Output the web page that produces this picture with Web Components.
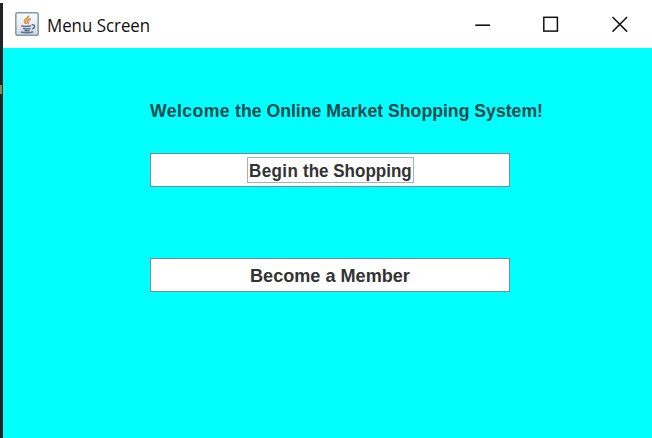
<!DOCTYPE html>
<html lang="en"><head><meta charset="utf-8"><title>Menu Screen</title>
<style>html,body{margin:0;height:100%;overflow:hidden;background:#fff}</style></head>
<body><app-window></app-window>
<script>
const define=(name,html,init)=>customElements.define(name,class extends HTMLElement{
  constructor(){super();this.attachShadow({mode:'open'}).innerHTML=html;}
  connectedCallback(){if(init)init(this);}
});
// Text condensed or widened horizontally to the width in its "width" attribute
define('fit-text',`<style>:host{display:block;white-space:nowrap;overflow:visible}
span{display:inline-block;transform-origin:0 50%}</style><span><slot></slot></span>`,el=>{
  const w=+el.getAttribute('width'),s=el.shadowRoot.querySelector('span');
  el.style.width=w+'px';
  s.style.transform=`scaleX(${w/s.offsetWidth})`;
});
define('java-icon',`<style>:host{display:block;width:24px;height:24px}svg{display:block}</style>
<svg width="24" height="24" viewBox="0 0 24 24" fill="none">
<defs><linearGradient id="g" x2="0" y2="1"><stop stop-color="#f8fafb"/><stop offset=".5" stop-color="#e9eef2"/><stop offset="1" stop-color="#ccd8e1"/></linearGradient></defs>
<rect x=".8" y=".8" width="22.4" height="22.4" rx="1.8" fill="url(#g)" stroke="#8499a8" stroke-width="1.5"/>
<path d="M13.4 3.8c.8 2.2-4.3 3.2-3.8 5.8.2 1 1.3 1.5 1.7 2.3M15.8 6.8c-2 .7-3.6 1.7-3.2 2.9.3.8 1 1 .3 2.2" stroke="#e08a38" stroke-width="1.8"/>
<path d="M6.3 13.8c2 .7 6.5.6 9.6-.1M8 16.4c2 .7 5 .6 7.4.1M9.4 18.4c1.6.4 3.6.3 5.2 0M16.6 12.9c4.3-.8 3.8 3.3.2 4M6 20c2.5 1 9.5 1 12.3-.2" stroke="#58748d" stroke-width="1.5"/>
</svg>`);
define('window-controls',`<style>:host{display:flex;align-items:center;gap:53px}svg{display:block}</style>
<svg width="16" height="17"><path d="M1.3 9.2h15" stroke="#111" stroke-width="1.6"/></svg>
<svg width="16" height="17" fill="none"><rect x=".8" y="1.3" width="13.6" height="13.8" stroke="#111" stroke-width="1.5"/></svg>
<svg width="16" height="17"><path d="M.5 1l14.6 14.6M15.1 1L.5 15.6" stroke="#111" stroke-width="1.5"/></svg>`);
define('title-bar',`<style>:host{display:flex;align-items:center;height:48px;box-sizing:border-box;padding:0 24px 0 12px;background:#fff;color:#101010;font:18px/24px "Open Sans","Noto Sans",sans-serif}
java-icon{margin-right:8px}window-controls{margin-left:auto}fit-text{margin-top:2px}</style>
<java-icon></java-icon><fit-text width="103"><slot></slot></fit-text><window-controls></window-controls>`);
define('push-button',`<style>:host{display:block;width:360px;height:34px}
button{width:100%;height:100%;box-sizing:border-box;display:flex;align-items:center;justify-content:center;padding:0;border:1px solid #6e8e98;border-radius:0;background:#fff;color:#333;font:inherit}
div{box-sizing:border-box;height:26px;padding:0 1px;border:1px solid transparent;line-height:25px}
:host([focused]) div{border-color:#9db3c8}</style><button><div><slot></slot></div></button>`);
define('menu-panel',`<style>:host{display:flex;flex-direction:column;align-items:flex-start;flex:1;box-sizing:border-box;background:#0ff;padding:52px 0 0 147px;color:#17494d;font:bold 19px/22px "Liberation Sans",Arial,sans-serif}
.first{margin-top:31px}.second{margin-top:71px}.lead{letter-spacing:.45px}</style>
<fit-text width="393"><span class="lead">Welcome</span> the Online Market Shopping System!</fit-text>
<push-button class="first" focused><fit-text width="163"><span class="lead">Begin</span> the Shopping</fit-text></push-button>
<push-button class="second"><fit-text width="160">Become a Member</fit-text></push-button>`);
define('app-window',`<style>:host{display:grid;grid-template-columns:3px 1fr;height:438px;width:652px}
.edge{margin-top:3px;background:linear-gradient(#8b8654,#8b8654) 0 82px/2px 9px no-repeat,#202427}
main{display:flex;flex-direction:column;min-width:0}</style>
<div class="edge"></div><main><title-bar>Menu Screen</title-bar><menu-panel></menu-panel></main>`);
</script></body></html>
